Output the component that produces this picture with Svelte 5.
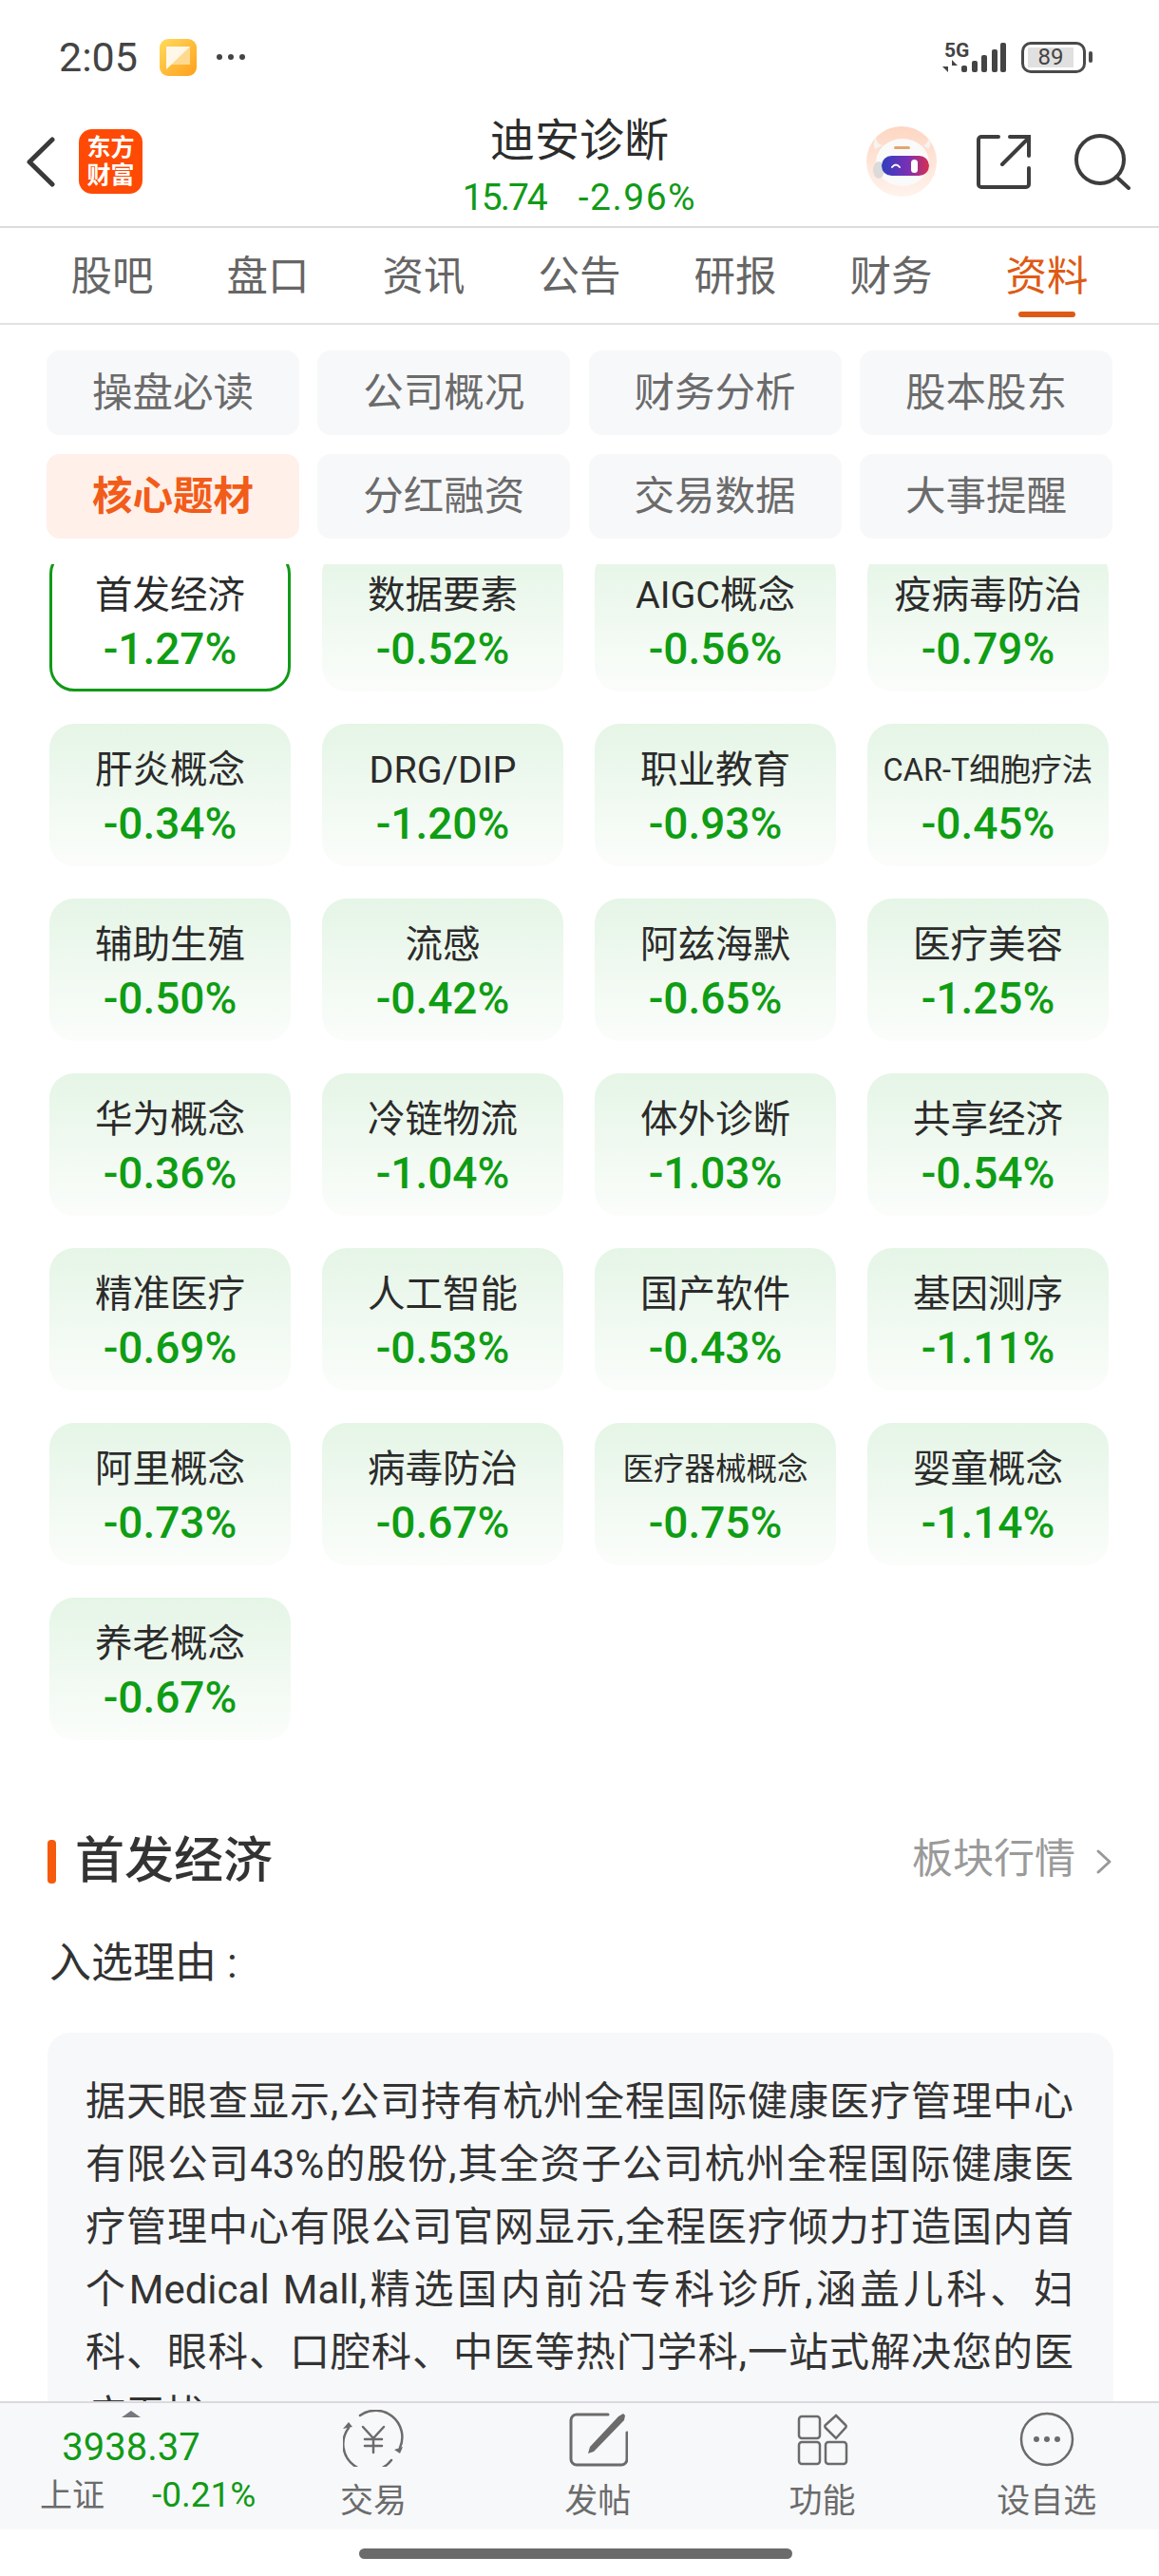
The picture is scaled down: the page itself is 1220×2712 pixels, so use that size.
<script>
  const tabs = ['股吧', '盘口', '资讯', '公告', '研报', '财务', '资料']
  const subTabs = ['操盘必读', '公司概况', '财务分析', '股本股东', '核心题材', '分红融资', '交易数据', '大事提醒']
  const smallNames = ['CAR-T细胞疗法', '医疗器械概念']
  const themes = [
    ['首发经济', '-1.27%'], ['数据要素', '-0.52%'], ['AIGC概念', '-0.56%'], ['疫病毒防治', '-0.79%'],
    ['肝炎概念', '-0.34%'], ['DRG/DIP', '-1.20%'], ['职业教育', '-0.93%'], ['CAR-T细胞疗法', '-0.45%'],
    ['辅助生殖', '-0.50%'], ['流感', '-0.42%'], ['阿兹海默', '-0.65%'], ['医疗美容', '-1.25%'],
    ['华为概念', '-0.36%'], ['冷链物流', '-1.04%'], ['体外诊断', '-1.03%'], ['共享经济', '-0.54%'],
    ['精准医疗', '-0.69%'], ['人工智能', '-0.53%'], ['国产软件', '-0.43%'], ['基因测序', '-1.11%'],
    ['阿里概念', '-0.73%'], ['病毒防治', '-0.67%'], ['医疗器械概念', '-0.75%'], ['婴童概念', '-1.14%'],
    ['养老概念', '-0.67%']
  ]
  const reason = '据天眼查显示,公司持有杭州全程国际健康医疗管理中心有限公司43%的股份,其全资子公司杭州全程国际健康医疗管理中心有限公司官网显示,全程医疗倾力打造国内首个Medical Mall,精选国内前沿专科诊所,涵盖儿科、妇科、眼科、口腔科、中医等热门学科,一站式解决您的医疗无忧。'
</script>

<div class="phone">
  <div class="status">
    <span class="time">2:05</span>
    <svg class="note" width="39" height="39" viewBox="0 0 39 39">
      <defs>
        <linearGradient id="noteBg" x1="0" y1="0" x2="1" y2="1">
          <stop offset="0" stop-color="#ffdb5c" />
          <stop offset="1" stop-color="#ff9f1c" />
        </linearGradient>
      </defs>
      <rect width="39" height="39" rx="9" fill="url(#noteBg)" />
      <path d="M7 8h25v19H12l-5 5z" fill="#ffd98f" />
      <path d="M7 8h25L7 32z" fill="#fff8e8" />
    </svg>
    <svg class="dots" width="32" height="8" viewBox="0 0 32 8">
      <circle cx="4" cy="4" r="3" fill="#444" />
      <circle cx="16" cy="4" r="3" fill="#444" />
      <circle cx="28" cy="4" r="3" fill="#444" />
    </svg>
    <div class="status-right">
      <svg width="70" height="36" viewBox="0 0 70 36">
        <text x="3" y="18" class="five-g">5G</text>
        <path d="M7 21v13l-6-6h6zM11 34V21l6 6h-6z" fill="#444" />
        <g fill="#444">
          <rect x="21" y="27" width="6" height="7" rx="2" />
          <rect x="32" y="22" width="6" height="12" rx="2" />
          <rect x="42" y="16" width="6" height="18" rx="2" />
          <rect x="53" y="10" width="6" height="24" rx="2" />
          <rect x="62" y="3" width="6" height="31" rx="2" />
        </g>
      </svg>
      <div class="battery"><span class="level">89</span></div>
      <span class="battery-tip"></span>
    </div>
  </div>

  <header class="header">
    <div class="side left">
      <svg width="31" height="53" viewBox="0 0 31 53">
        <path d="M28 3 4 26.5 28 50" fill="none" stroke="#3a3a3a" stroke-width="5" stroke-linecap="round" stroke-linejoin="round" />
      </svg>
      <div class="logo"><span>东方</span><span>财富</span></div>
    </div>
    <div class="title">
      <div class="name">迪安诊断</div>
      <div class="price"><span class="last">15.74</span><span class="change">-2.96%</span></div>
    </div>
    <div class="side right">
      <svg width="74" height="74" viewBox="0 0 74 74">
        <defs>
          <linearGradient id="avBg" x1="0" y1="0" x2="0" y2="1">
            <stop offset="0" stop-color="#fdd6c2" />
            <stop offset="1" stop-color="#fff3ed" />
          </linearGradient>
          <linearGradient id="visor" x1="0" y1="0" x2="1" y2="0">
            <stop offset="0" stop-color="#2f3fc0" />
            <stop offset="0.55" stop-color="#7a2fb5" />
            <stop offset="1" stop-color="#d92f4e" />
          </linearGradient>
        </defs>
        <circle cx="37" cy="37" r="37" fill="url(#avBg)" />
        <path d="M9 24c-2-5-1-9 1-12 1 5 3 7 7 8zM60 20c3-1 5-4 6-8 2 4 2 9-1 12z" fill="#f6f3f1" />
        <ellipse cx="38" cy="38" rx="28" ry="25" fill="#fbfafa" />
        <ellipse cx="13" cy="46" rx="6" ry="9" fill="#dcdada" />
        <rect x="29" y="21" width="17" height="3" rx="1.5" fill="#e3a56f" />
        <rect x="16" y="31" width="50" height="21" rx="10.5" fill="url(#visor)" />
        <path d="M27 43q4-5 8 0" fill="none" stroke="#fff" stroke-width="2" stroke-linecap="round" />
        <rect x="47" y="35" width="7" height="14" rx="3.5" fill="#fff" />
      </svg>
      <svg class="share" width="57" height="57" viewBox="0 0 57 57">
        <path d="M23 2H5a3 3 0 0 0-3 3v47a3 3 0 0 0 3 3h47a3 3 0 0 0 3-3V35" fill="none" stroke="#3d3d3d" stroke-width="4" stroke-linecap="round" />
        <path d="M27 31 55 3M35 2h20v20" fill="none" stroke="#3d3d3d" stroke-width="4" stroke-linecap="round" />
      </svg>
      <svg class="search" width="59" height="59" viewBox="0 0 59 59">
        <circle cx="27" cy="27" r="25" fill="none" stroke="#3d3d3d" stroke-width="4" />
        <path d="M44 45 57 57" stroke="#3d3d3d" stroke-width="4" stroke-linecap="round" />
      </svg>
    </div>
  </header>

  <nav class="tabs">
    {#each tabs as tab}
      <div class="tab" class:on={tab === '资料'}>{tab}</div>
    {/each}
  </nav>

  <div class="subtabs">
    {#each subTabs as sub}
      <div class="subtab" class:on={sub === '核心题材'}>{sub}</div>
    {/each}
  </div>

  <main class="scroller">
    <div class="scroll-inner">
      <div class="cards">
        {#each themes as [name, pct], i}
          <div class="card" class:selected={i === 0}>
            <div class="card-name" class:small={smallNames.includes(name)}>{name}</div>
            <div class="card-pct">{pct}</div>
          </div>
        {/each}
      </div>

      <div class="section-head">
        <span class="bar"></span>
        <h2>首发经济</h2>
        <span class="more">板块行情</span>
        <svg width="22" height="28" viewBox="0 0 22 28">
          <path d="M5 3 17 14 5 25" fill="none" stroke="#999" stroke-width="3" stroke-linecap="round" stroke-linejoin="round" />
        </svg>
      </div>

      <div class="reason-label">入选理由 :</div>
      <div class="reason">{reason}</div>
    </div>
  </main>

  <footer class="footer">
    <div class="quote">
      <span class="arrow"></span>
      <div class="index">3938.37</div>
      <div class="quote-row"><span class="index-name">上证</span><span class="index-pct">-0.21%</span></div>
    </div>
    <div class="item">
      <svg width="64" height="60" viewBox="0 0 64 60">
        <g fill="none" stroke="#6b6b6b" stroke-width="2.5" stroke-linecap="round" stroke-linejoin="round">
          <path d="M18 6A28 28 0 0 1 60 40" />
          <path d="M51 53A28 28 0 0 1 6 19" />
          <path d="M21 18l11 12 11-12M32 30v15M23 31h18M23 38h18" />
        </g>
        <path d="M60 46l-6-4 9-3zM6 13l-6 7 10-2z" fill="#6b6b6b" />
      </svg>
      <span>交易</span>
    </div>
    <div class="item">
      <svg width="64" height="60" viewBox="0 0 64 60">
        <path d="M43 5H10a6 6 0 0 0-6 6v41a6 6 0 0 0 6 6h47a6 6 0 0 0 6-6V24" fill="none" stroke="#6b6b6b" stroke-width="3" stroke-linecap="round" />
        <path d="M54 7l5-3 2 2-1 5-32 33-6 2 2-7z" fill="#6b6b6b" />
      </svg>
      <span>发帖</span>
    </div>
    <div class="item">
      <svg width="60" height="60" viewBox="0 0 60 60">
        <g fill="none" stroke="#6b6b6b" stroke-width="2.5">
          <rect x="5" y="7" width="22" height="23" rx="3" />
          <rect x="5" y="34" width="22" height="23" rx="3" />
          <rect x="33" y="34" width="22" height="23" rx="3" />
          <path d="M44 6l10 10a2 2 0 0 1 0 3L44 30 33 19a2 2 0 0 1 0-3z" />
        </g>
      </svg>
      <span>功能</span>
    </div>
    <div class="item">
      <svg width="60" height="60" viewBox="0 0 60 60">
        <circle cx="30" cy="31" r="27" fill="none" stroke="#6b6b6b" stroke-width="2.5" />
        <circle cx="19" cy="31" r="3" fill="#6b6b6b" />
        <circle cx="30" cy="31" r="3" fill="#6b6b6b" />
        <circle cx="41" cy="31" r="3" fill="#6b6b6b" />
      </svg>
      <span>设自选</span>
    </div>
  </footer>

  <div class="home"><span class="indicator"></span></div>
</div>

<style>
  :global(body) {
    margin: 0;
    background: #fff;
  }

  .phone {
    width: 1220px;
    height: 2712px;
    display: flex;
    flex-direction: column;
    overflow: hidden;
    background: #fff;
    font-family: Roboto, "Noto Sans CJK SC", sans-serif;
    color: #333;
  }

  /* status bar */
  .status {
    height: 110px;
    flex: none;
    display: flex;
    align-items: center;
    padding: 10px 70px 0 62px;
    box-sizing: border-box;
    color: #444;
  }
  .time {
    font-size: 43px;
    line-height: 50px;
    width: 106px;
  }
  .dots {
    margin-left: 20px;
  }
  .status-right {
    margin-left: auto;
    display: flex;
    align-items: center;
  }
  .five-g {
    font: 700 21px Roboto, sans-serif;
    fill: #444;
  }
  .battery {
    width: 68px;
    height: 33px;
    margin-left: 14px;
    box-sizing: border-box;
    border: 3px solid #4a4a4a;
    border-radius: 10px;
    padding: 3px 10px 3px 4px;
    display: flex;
  }
  .level {
    flex: 1;
    background: #e0e0e0;
    font-size: 24px;
    line-height: 21px;
    text-align: center;
    color: #444;
  }
  .battery-tip {
    width: 4px;
    height: 12px;
    margin-left: 3px;
    border-radius: 2px;
    background: #4a4a4a;
  }

  /* header */
  .header {
    height: 130px;
    flex: none;
    box-sizing: border-box;
    border-bottom: 2px solid #dcdcdc;
    display: grid;
    grid-template-columns: 1fr auto 1fr;
  }
  .side {
    display: flex;
    align-items: center;
    padding-bottom: 8px;
  }
  .left {
    padding-left: 27px;
    gap: 25px;
  }
  .right {
    justify-content: flex-end;
    padding-right: 30px;
  }
  .logo {
    width: 67px;
    height: 68px;
    border-radius: 14px;
    background: #ff4a05;
    color: #fff;
    font-size: 25px;
    font-weight: 700;
    line-height: 29px;
    display: flex;
    flex-direction: column;
    align-items: center;
    justify-content: center;
  }
  .share {
    margin-left: 42px;
  }
  .search {
    margin-left: 46px;
  }
  .title {
    text-align: center;
    padding-top: 7px;
  }
  .name {
    font-size: 47px;
    line-height: 61px;
    color: #2c2c2c;
  }
  .price {
    display: flex;
    justify-content: center;
    gap: 34px;
    font-size: 39px;
    line-height: 60px;
    color: #119a17;
  }
  .last {
    letter-spacing: -2px;
  }
  .change {
    letter-spacing: 1.5px;
  }

  /* tabs */
  .tabs {
    height: 102px;
    flex: none;
    box-sizing: border-box;
    padding-left: 36px;
    border-bottom: 2px solid #e2e2e2;
    display: grid;
    grid-template-columns: repeat(7, 164px);
  }
  .tab {
    position: relative;
    font-size: 43.5px;
    line-height: 103px;
    height: 100px;
    text-align: center;
    color: #666;
  }
  .tab.on {
    color: #de5a14;
  }
  .tab.on::after {
    content: "";
    position: absolute;
    left: 52px;
    bottom: 6px;
    width: 60px;
    height: 6px;
    border-radius: 3px;
    background: #de5a14;
  }

  .subtabs {
    flex: none;
    height: 252px;
    box-sizing: border-box;
    padding: 27px 48px 27px 49px;
    display: grid;
    grid-template-columns: repeat(4, 266px);
    grid-auto-rows: 89px;
    column-gap: 19.3px;
    row-gap: 20px;
  }
  .subtab {
    background: #f7f8fa;
    border-radius: 14px;
    font-size: 42.5px;
    line-height: 89px;
    text-align: center;
    color: #6b6b6b;
  }
  .subtab.on {
    background: #fff0e9;
    color: #f25c19;
    font-weight: 700;
  }

  /* scrolled content */
  .scroller {
    flex: 1;
    min-height: 0;
    overflow: hidden;
  }
  .scroll-inner {
    margin-top: -16px;
  }
  .cards {
    padding: 0 52px;
    display: grid;
    grid-template-columns: repeat(4, 254px);
    grid-auto-rows: 150px;
    column-gap: 33px;
    row-gap: 34px;
  }
  .card {
    box-sizing: border-box;
    border-radius: 26px;
    background: linear-gradient(#e5f5e6, #fbfdfb);
    text-align: center;
    padding-top: 25px;
  }
  .card.selected {
    background: #fff;
    border: 3px solid #119a17;
    padding-top: 22px;
  }
  .card-name {
    font-size: 39.5px;
    line-height: 48px;
    color: #2b2b2b;
  }
  .card-name.small {
    font-size: 32.5px;
  }
  .card-pct {
    font-size: 46px;
    font-weight: 500;
    line-height: 56px;
    margin-top: 4px;
    color: #0f9d14;
  }

  .section-head {
    margin-top: 94px;
    padding: 0 47px 0 50px;
    height: 68px;
    display: flex;
    align-items: center;
  }
  .bar {
    width: 9px;
    height: 46px;
    border-radius: 4px;
    background: #f65a0c;
  }
  h2 {
    margin: 0 0 0 20px;
    font-size: 52px;
    font-weight: 500;
    line-height: 68px;
    color: #333;
  }
  .more {
    margin-left: auto;
    margin-right: 19px;
    font-size: 43px;
    line-height: 60px;
    margin-bottom: 6px;
    color: #9a9a9a;
  }

  .reason-label {
    margin-top: 43px;
    padding-left: 52px;
    font-size: 44px;
    line-height: 60px;
    color: #333;
  }
  .reason {
    margin: 43px 48px 0 50px;
    padding: 40px 42px 40px 40px;
    border-radius: 24px;
    background: #f7f8fa;
    font-size: 42px;
    line-height: 66px;
    text-align: justify;
    color: #333;
  }

  /* bottom bar */
  .footer {
    height: 135px;
    flex: none;
    box-sizing: border-box;
    border-top: 2px solid #d9d9de;
    background: #f7f8fa;
    display: grid;
    grid-template-columns: 275px repeat(4, 1fr);
  }
  .quote {
    display: flex;
    flex-direction: column;
    align-items: flex-start;
  }
  .arrow {
    margin: 8px 0 0 128px;
    width: 0;
    height: 0;
    border: 10px solid transparent;
    border-top: 0;
    border-bottom: 7px solid #77777f;
  }
  .index {
    width: 276px;
    text-align: center;
    font-size: 40px;
    line-height: 50px;
    margin-top: 7px;
    color: #119a17;
  }
  .quote-row {
    margin-left: 42px;
    display: flex;
    align-items: center;
    gap: 50px;
    line-height: 50px;
  }
  .index-name {
    font-size: 34px;
    color: #6b6b6b;
  }
  .index-pct {
    font-size: 37px;
    color: #119a17;
  }
  .item {
    display: flex;
    flex-direction: column;
    align-items: center;
    padding-top: 7px;
    font-size: 35px;
    line-height: 40px;
    color: #6b6b6b;
  }
  .item span {
    margin-top: 17px;
  }

  .home {
    flex: none;
    height: 49px;
    padding-top: 20px;
    box-sizing: border-box;
  }
  .indicator {
    display: block;
    width: 456px;
    height: 11px;
    margin-left: 378px;
    border-radius: 6px;
    background: #6b6b6b;
  }
</style>
